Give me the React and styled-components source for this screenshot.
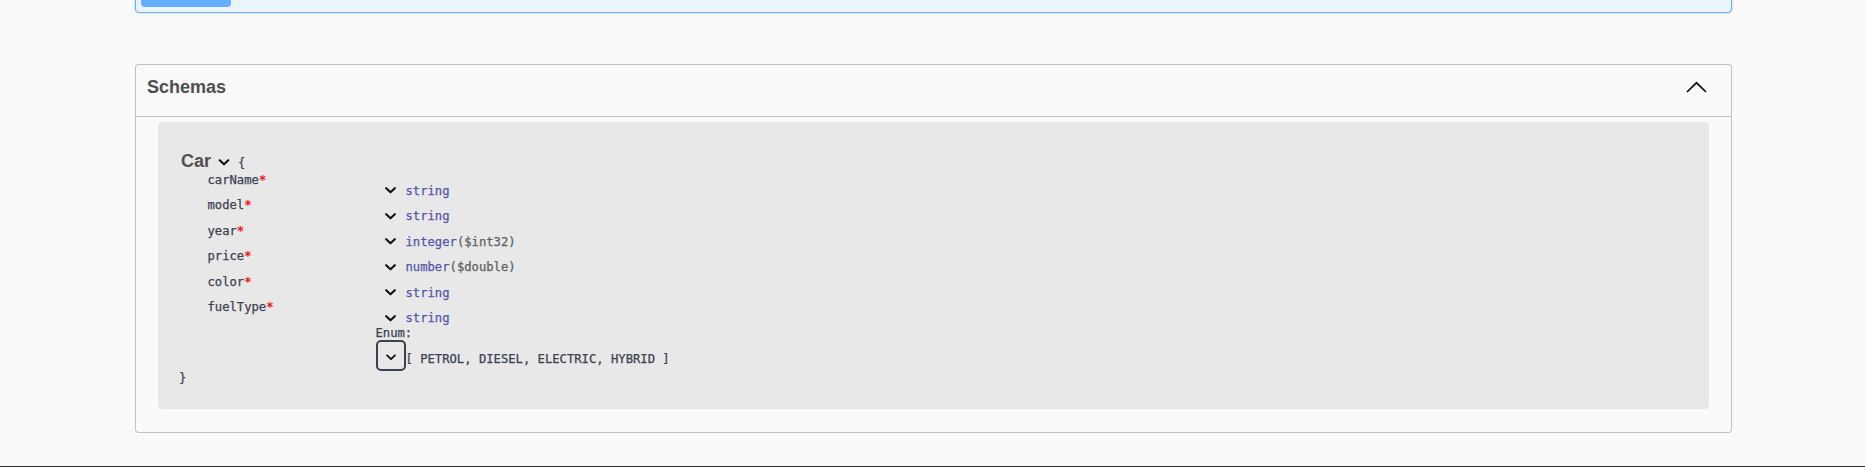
import React from "react";
import styled, { createGlobalStyle } from "styled-components";

const GlobalStyle = createGlobalStyle`
  html, body {
    margin: 0;
    padding: 0;
    background: #fafafa;
    overflow: hidden;
  }
  body {
    font-family: "Liberation Sans", Arial, sans-serif;
  }
`;

const properties = [
  { name: "carName", type: "string" },
  { name: "model", type: "string" },
  { name: "year", type: "integer", format: "$int32" },
  { name: "price", type: "number", format: "$double" },
  { name: "color", type: "string" },
  {
    name: "fuelType",
    type: "string",
    enumValues: ["PETROL", "DIESEL", "ELECTRIC", "HYBRID"],
  },
];

const ChevronDown = ({ width = 11 }) => (
  <svg width={width} height="7" viewBox="0 0 11 7">
    <polyline
      points="1.2,1.2 5.5,5.3 9.8,1.2"
      fill="none"
      stroke="currentColor"
      strokeWidth="2.1"
      strokeLinecap="round"
      strokeLinejoin="round"
    />
  </svg>
);

const ChevronUp = () => (
  <svg width="21" height="12" viewBox="0 0 21 12">
    <polyline
      points="1,11 10.5,1.8 20,11"
      fill="none"
      stroke="#111"
      strokeWidth="1.7"
    />
  </svg>
);

const Page = styled.div`
  display: flex;
  flex-direction: column;
`;

const Wrapper = styled.div`
  width: 1597px;
  margin-left: 135px;
  display: flex;
  flex-direction: column;
`;

const OpBlock = styled.div`
  margin-top: -40px;
  padding: 16px 5px 5px;
  border: 1px solid #61affe;
  border-radius: 4px;
  background: #ebf3fb;
  box-shadow: 0 0 3px rgba(0, 0, 0, 0.19);
`;

const ExecuteButton = styled.div`
  width: 90px;
  height: 30px;
  border-radius: 4px;
  background: #61affe;
`;

const Section = styled.section`
  margin-top: 51px;
  border: 1px solid rgba(59, 65, 81, 0.3);
  border-radius: 4px;
  background: #fafafa;
`;

const SectionHeader = styled.div`
  box-sizing: border-box;
  height: 52px;
  padding: 0 24px 7px 11px;
  display: flex;
  align-items: center;
  justify-content: space-between;
  border-bottom: 1px solid rgba(59, 65, 81, 0.3);
`;

const SectionTitle = styled.h4`
  margin: 0;
  font-size: 18px;
  line-height: 21px;
  font-weight: 700;
  color: #4f4f4f;
`;

const SectionBody = styled.div`
  padding: 5px 22px 23px;
`;

const ModelBox = styled.div`
  padding: 29px 20px 23px;
  background: #e8e8e8;
  border-radius: 4px;
  font-family: "DejaVu Sans Mono", "Liberation Mono", monospace;
  font-size: 12.2px;
  line-height: 14.5px;
  color: #3b4151;
  -webkit-text-stroke: 0.25px currentColor;
`;

const TitleRow = styled.div`
  height: 21.5px;
  display: flex;
  align-items: baseline;
`;

const ModelTitle = styled.span`
  margin-left: 3px;
  font-family: "Liberation Sans", Arial, sans-serif;
  font-size: 18px;
  line-height: 21px;
  font-weight: 700;
  color: #505050;
  -webkit-text-stroke: 0;
`;

const TitleToggle = styled.span`
  align-self: center;
  display: flex;
  margin: 2px 8px 0 7px;
  color: #111;
`;

const Brace = styled.span`
  color: #3b4151;
  margin-left: ${(p) => (p.$close ? "1px" : "0")};
`;

const PropTable = styled.div`
  margin-left: 29.5px;
  display: grid;
  grid-template-columns: 168px auto;
  align-items: start;
`;

const PropName = styled.div`
  color: #3b4151;
`;

const Star = styled.span`
  color: #f00;
`;

const TypeCell = styled.div`
  padding-top: 11px;
  display: flex;
  flex-direction: column;
`;

const TypeLine = styled.div`
  height: 14.5px;
  display: flex;
  align-items: center;
`;

const Toggle = styled.span`
  box-sizing: border-box;
  width: 30px;
  display: flex;
  justify-content: center;
  align-items: ${(p) => (p.$boxed ? "flex-end" : "center")};
  color: #111;
  ${(p) =>
    p.$boxed &&
    `
    height: 31px;
    padding-bottom: 8px;
    border: 2px solid #3b4151;
    border-radius: 5px;
  `}
`;

const TypeName = styled.span`
  color: #55a;
`;

const TypeFormat = styled.span`
  color: #606060;
`;

const EnumRow = styled.div`
  display: flex;
  align-items: flex-start;
`;

const EnumValues = styled.span`
  margin-top: 12px;
  color: #3b4151;
  white-space: pre;
`;

const Footer = styled.div`
  margin-top: 33px;
  height: 40px;
  background: #333;
`;

const PropertyRow = ({ prop }) => (
  <>
    <PropName>
      {prop.name}
      <Star>*</Star>
    </PropName>
    <TypeCell>
      <TypeLine>
        <Toggle>
          <ChevronDown />
        </Toggle>
        <TypeName>{prop.type}</TypeName>
        {prop.format && <TypeFormat>({prop.format})</TypeFormat>}
      </TypeLine>
      {prop.enumValues && (
        <>
          <div>Enum:</div>
          <EnumRow>
            <Toggle $boxed>
              <ChevronDown width={10} />
            </Toggle>
            <EnumValues>[ {prop.enumValues.join(", ")} ]</EnumValues>
          </EnumRow>
        </>
      )}
    </TypeCell>
  </>
);

const App = () => {
  return (
    <Page>
      <GlobalStyle />
      <Wrapper>
        <OpBlock>
          <ExecuteButton />
        </OpBlock>

        <Section>
          <SectionHeader>
            <SectionTitle>Schemas</SectionTitle>
            <ChevronUp />
          </SectionHeader>
          <SectionBody>
            <ModelBox>
              <TitleRow>
                <ModelTitle>Car</ModelTitle>
                <TitleToggle>
                  <ChevronDown width={12} />
                </TitleToggle>
                <Brace>{"{"}</Brace>
              </TitleRow>
              <PropTable>
                {properties.map((p) => (
                  <PropertyRow key={p.name} prop={p} />
                ))}
              </PropTable>
              <Brace $close>{"}"}</Brace>
            </ModelBox>
          </SectionBody>
        </Section>
      </Wrapper>
      <Footer />
    </Page>
  );
};

export default App;
